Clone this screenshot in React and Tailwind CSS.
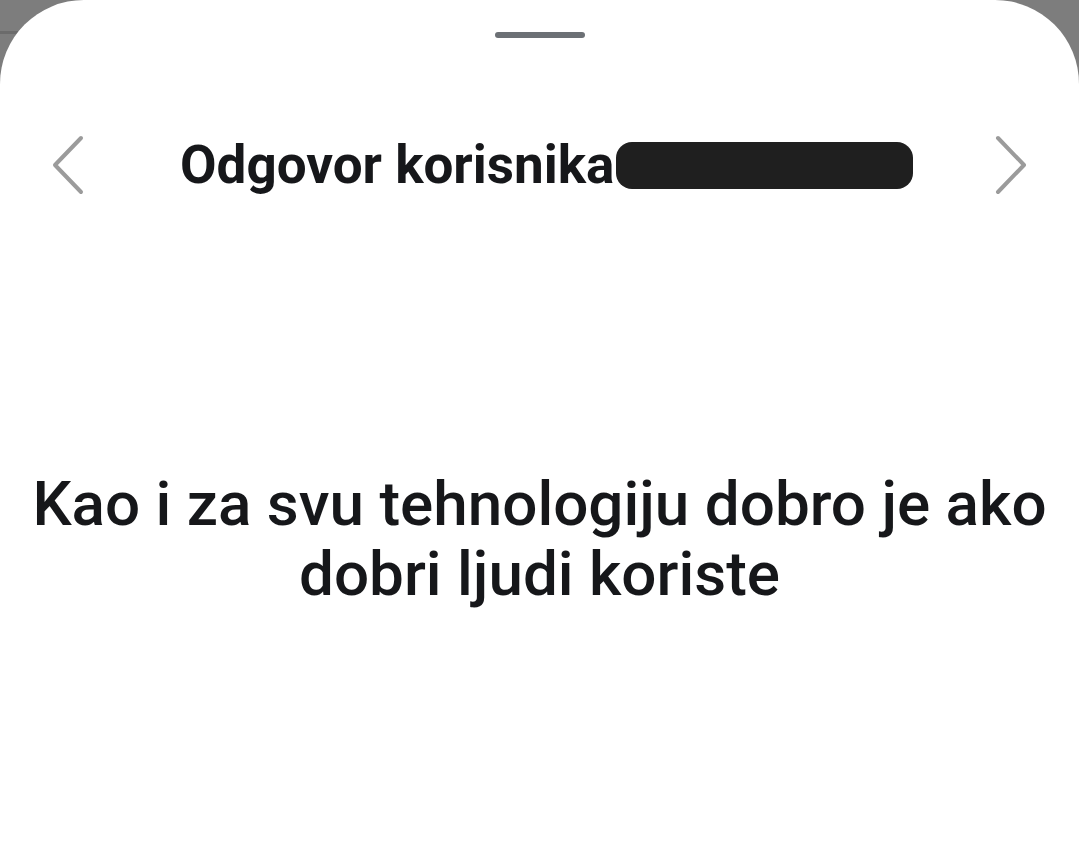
import React from 'react';

const Chevron = ({ dir }) => (
  <svg width="36" height="60" viewBox="0 0 36 60" fill="none">
    <path
      d={dir === 'left' ? 'M31 3 L5 30 L31 57' : 'M5 3 L31 30 L5 57'}
      stroke="#9b9b9b"
      strokeWidth="4"
      strokeLinecap="round"
      strokeLinejoin="round"
    />
  </svg>
);

export default function App() {
  return (
    <div className="relative h-[845px] w-[1079px] overflow-hidden bg-[#7d7d7d]" style={{ fontFamily: 'Roboto, "Noto Sans", sans-serif' }}>
      <div className="absolute left-0 top-[31px] h-[3px] w-[20px] bg-[#6b6b6b]" />
      <div className="relative flex h-full flex-col rounded-t-[84px] bg-white">
        <div className="flex justify-center pt-[32px]">
          <div className="h-[6px] w-[90px] rounded-full bg-[#6c7075]" />
        </div>

        <div className="mt-[97px] flex items-center pl-[50px] pr-[50px]">
          <Chevron dir="left" />
          <div className="ml-[94px] flex items-center">
            <span className="text-[53px] font-bold leading-none text-[#16171a]">Odgovor korisnika</span>
            <span className="ml-[2px] h-[47px] w-[297px] rounded-[16px] bg-[#1f1f1f]" />
          </div>
          <div className="ml-auto">
            <Chevron dir="right" />
          </div>
        </div>

        <div className="mt-[274px] px-[10px] text-center text-[62px] font-medium leading-[70px] text-[#16171a]">
          Kao i za svu tehnologiju dobro je ako
          <br />
          dobri ljudi koriste
        </div>
      </div>
    </div>
  );
}
